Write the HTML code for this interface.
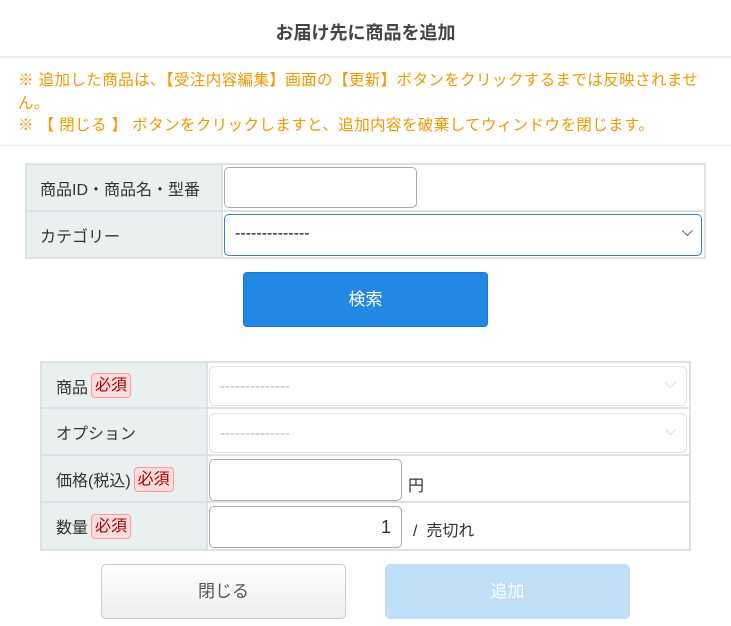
<!DOCTYPE html>
<html><head><meta charset="utf-8"><style>
*{box-sizing:border-box;margin:0;padding:0}
body{width:731px;height:626px;background:#fff;font-family:"Liberation Sans","Noto Sans CJK JP",sans-serif;position:relative;overflow:hidden;color:#333}
.a{position:absolute}
.title{left:0;width:731px;top:19px;text-align:center;font-size:18px;font-weight:bold;color:#444}
.hr{left:0;width:731px;height:2px;background:#eee}
.note{left:18px;color:#f39800;font-size:15.5px;line-height:22.5px;width:713px;white-space:nowrap;letter-spacing:0.4px}
.tb{border:2px solid #dde2e4;background:#fff}
.lab{background:#eaeff0;border-right:2px solid #dde2e4;font-size:16px;color:#333;display:flex;align-items:center;padding-left:14px}
.rowb{border-top:2px solid #dde2e4}
.inp{border:1px solid #aaa;border-radius:5px;background:#fff}
.req{display:inline-block;background:#fdd;border:1px solid #f99;color:#a00;border-radius:4px;font-size:16px;padding:1px 3px;margin-left:3px;line-height:21px}
.sel{border:1px solid #e3e3e3;border-radius:6px;background:#fff;color:#bbb;font-size:15px;padding:11px 10px}
</style></head><body>
<div class="a title">お届け先に商品を追加</div>
<div class="a hr" style="top:56px"></div>
<div class="a note" style="top:70px">※ 追加した商品は、【受注内容編集】画面の【更新】ボタンをクリックするまでは反映されませ<br>ん。<br>※ 【 閉じる 】 ボタンをクリックしますと、追加内容を破棄してウィンドウを閉じます。</div>
<div class="a hr" style="top:145px;height:1px"></div>

<div class="a tb" style="left:25px;top:163px;width:681px;height:96px"></div>
<div class="a lab" style="left:27px;top:165px;width:196px;height:46px;padding-left:13px">商品ID・商品名・型番</div>
<div class="a inp" style="left:224px;top:167px;width:193px;height:41px"></div>
<div class="a rowb" style="left:27px;top:210px;width:677px;height:2px"></div>
<div class="a lab" style="left:27px;top:212px;width:196px;height:45px;padding-left:13px">カテゴリー</div>
<div class="a" style="left:224px;top:214px;width:478px;height:42px;border:1px solid #3b7fc4;border-radius:5px;font-size:16px;padding:10px 10px;color:#111">--------------<span style="position:absolute;right:8px;top:8px;font-size:15px">&#x2335;</span></div>

<div class="a" style="left:243px;top:272px;width:245px;height:55px;background:#2288e3;border:1px solid #1a78cc;border-radius:4px;color:#fff;font-size:17px;text-align:center;line-height:53px">検索</div>

<div class="a tb" style="left:40px;top:361px;width:651px;height:190px"></div>
<div class="a lab" style="left:42px;top:363px;width:166px;height:45px">商品<span class="req">必須</span></div>
<div class="a sel" style="left:209px;top:366px;width:478px;height:40px">--------------<span style="position:absolute;right:10px;top:8px;color:#ccc">⌵</span></div>
<div class="a rowb" style="left:42px;top:407px;width:647px;height:2px"></div>
<div class="a lab" style="left:42px;top:409px;width:166px;height:45px">オプション</div>
<div class="a sel" style="left:209px;top:413px;width:478px;height:40px">--------------<span style="position:absolute;right:10px;top:8px;color:#ccc">⌵</span></div>
<div class="a rowb" style="left:42px;top:454px;width:647px;height:2px"></div>
<div class="a lab" style="left:42px;top:456px;width:166px;height:46px">価格(税込)<span class="req">必須</span></div>
<div class="a inp" style="left:209px;top:459px;width:193px;height:42px"></div>
<div class="a" style="left:408px;top:472px;font-size:16px">円</div>
<div class="a rowb" style="left:42px;top:501px;width:647px;height:2px"></div>
<div class="a lab" style="left:42px;top:503px;width:166px;height:46px">数量<span class="req">必須</span></div>
<div class="a inp" style="left:209px;top:506px;width:193px;height:42px;text-align:right;padding-right:10px;font-size:18px;line-height:40px">1</div>
<div class="a" style="left:413px;top:517px;font-size:16px">/ &nbsp;売切れ</div>

<div class="a" style="left:101px;top:564px;width:245px;height:55px;background:linear-gradient(#fff,#eee);border:1px solid #ccc;border-radius:5px;color:#555;font-size:17px;text-align:center;line-height:53px">閉じる</div>
<div class="a" style="left:385px;top:564px;width:245px;height:55px;background:#bfdef8;border-radius:5px;color:#fff;font-size:17px;text-align:center;line-height:55px">追加</div>
</body></html>
